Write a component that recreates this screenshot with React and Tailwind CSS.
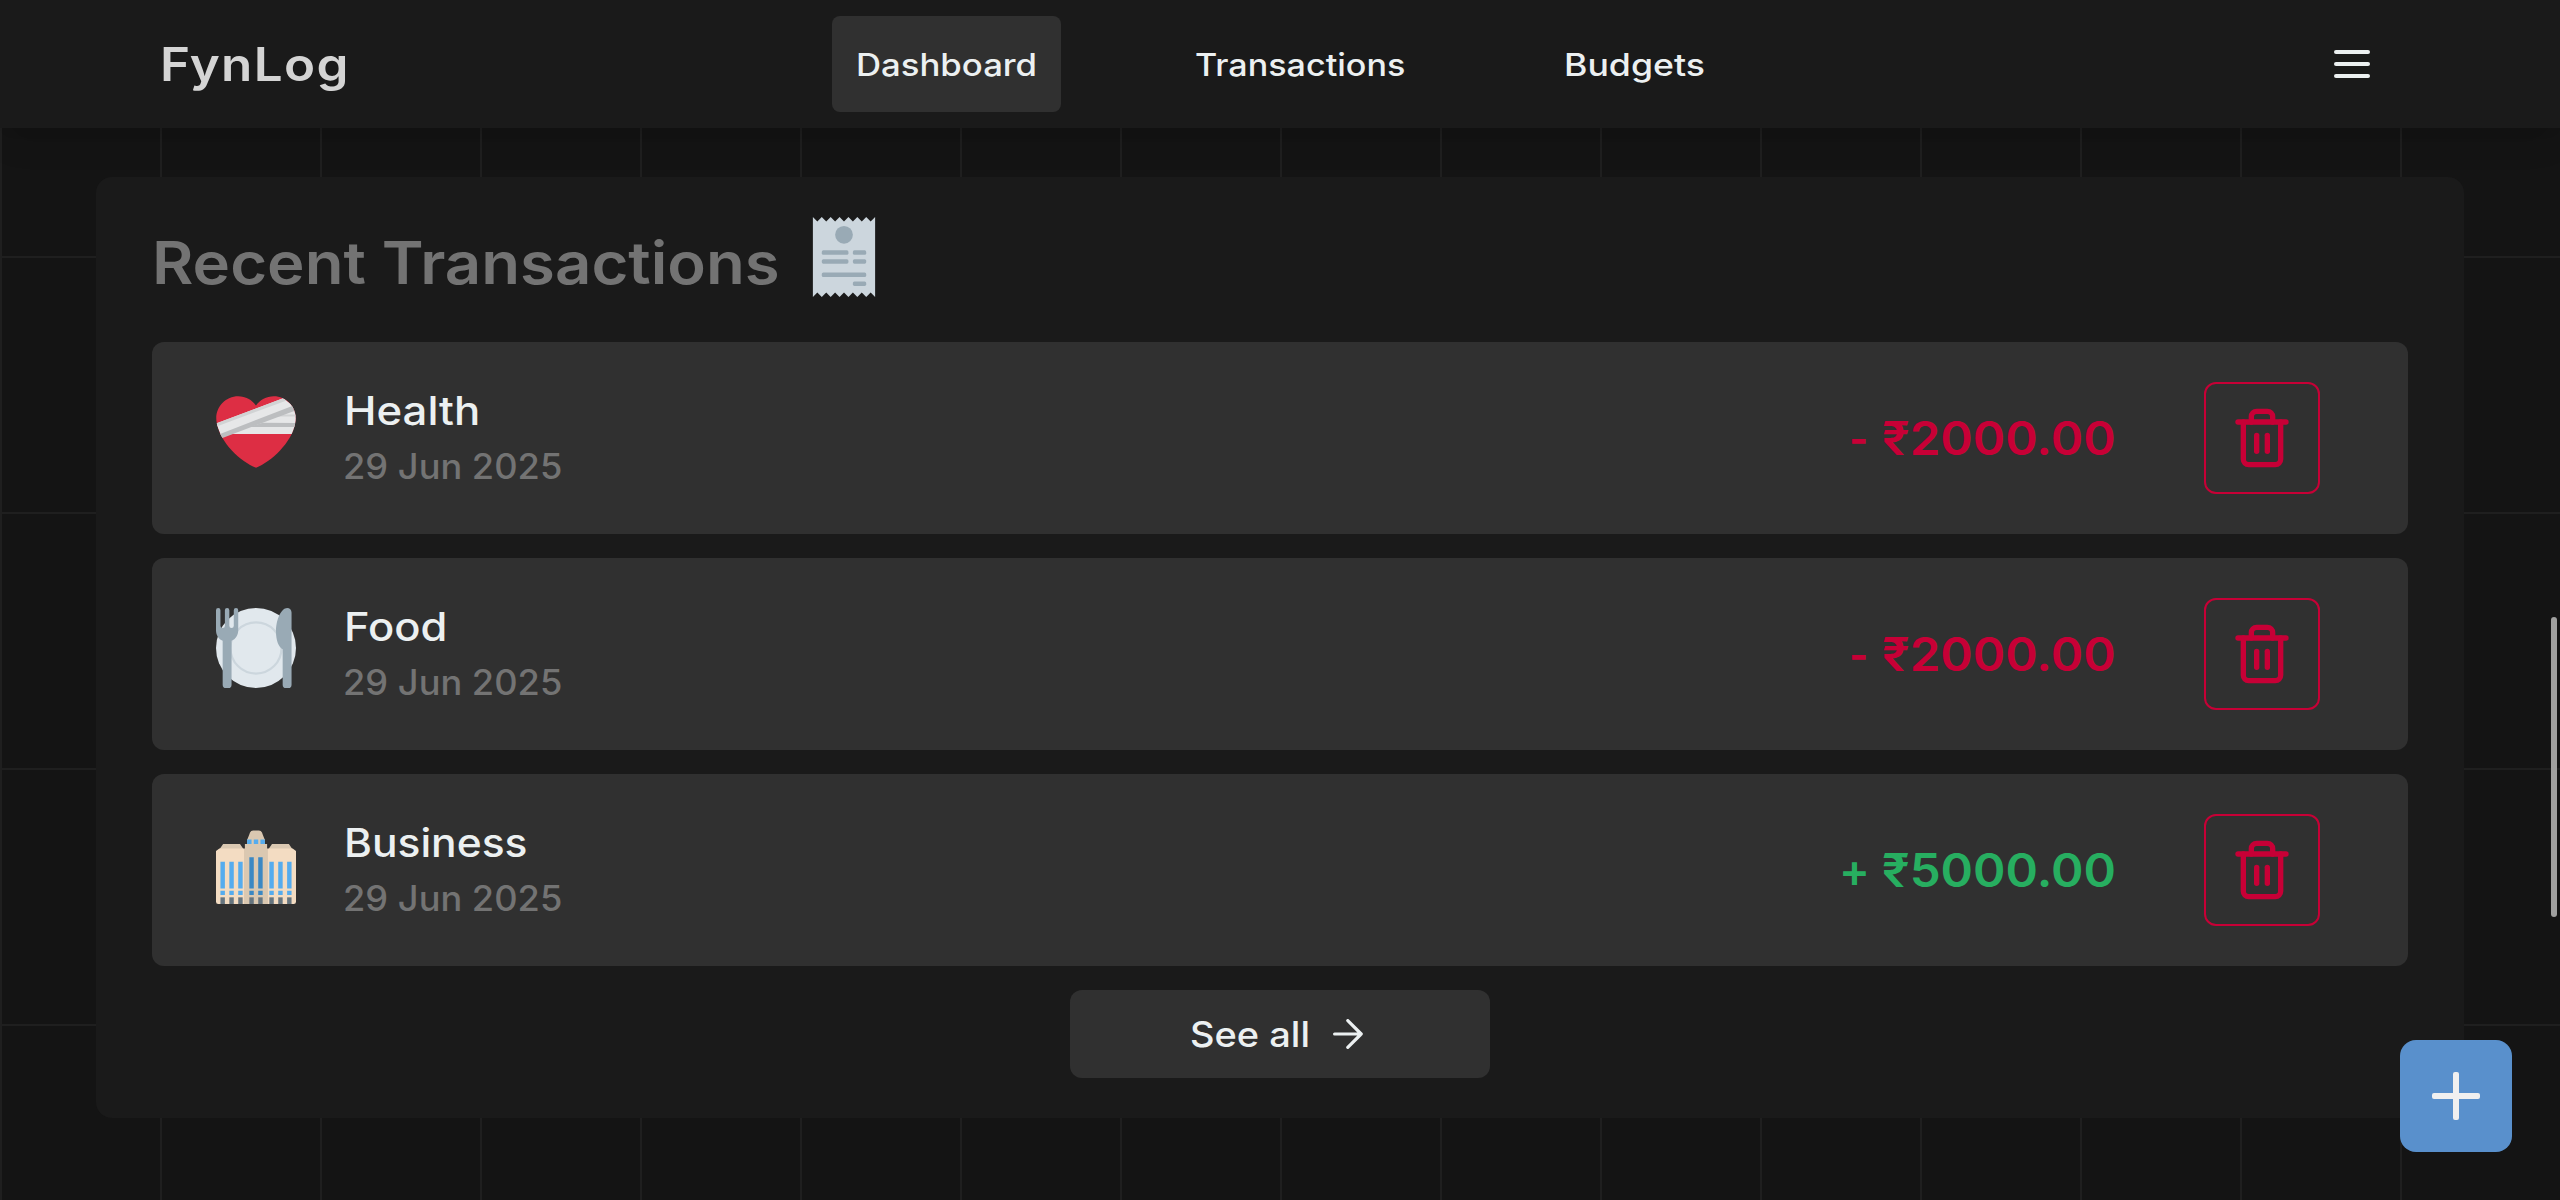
import { Trash2 } from "lucide-react";

const HEART =
  "M35.885 11.833c0-5.45-4.418-9.868-9.867-9.868-3.308 0-6.227 1.633-8.018 4.129-1.791-2.496-4.71-4.129-8.017-4.129-5.45 0-9.868 4.417-9.868 9.868 0 .772.098 1.52.266 2.241C1.751 22.587 11.216 31.568 18 34.034c6.783-2.466 16.249-11.447 17.617-19.959.17-.721.268-1.469.268-2.242z";

function HeartIcon() {
  return (
    <svg viewBox="0 0 36 36" className="mt-[10px] size-20 shrink-0">
      <clipPath id="heart-shape">
        <path d={HEART} />
      </clipPath>
      <path fill="#DD2E44" d={HEART} />
      <g clipPath="url(#heart-shape)">
        <path fill="#E6E7E8" d="M36 8v10.9H6.600L22 12z" />
        <path fill="#D1D3D4" d="M28 10.100h8v.9H26z" />
        <path fill="#BCBEC0" d="M36 13.900v1.800H15l6-1.900z" />
        <path fill="#E6E7E8" d="M0 14.200 30.200 2.800 36 7.100 2.400 20z" />
        <path fill="#D1D3D4" d="M0 14.200 30.200 2.800l1.600 1L0 15.600z" />
        <path fill="#BCBEC0" d="M1 19.200 34.600 6.200l.9 2.200L2 21z" />
      </g>
    </svg>
  );
}

function PlateIcon() {
  return (
    <svg viewBox="0 0 36 36" className="mt-[10px] size-20 shrink-0">
      <circle cx="18" cy="18" r="18" fill="#E1E8ED" />
      <circle cx="18" cy="18" r="11.5" fill="none" stroke="#CCD6DD" />
      <g fill="#99AAB5">
        <path d="M0 1a1 1 0 0 1 2 0v7a1 1 0 0 0 2 0V1a1 1 0 0 1 2 0v7a1 1 0 0 0 2 0V1a1 1 0 0 1 2 0v9c0 2.200-1.200 4.100-3 4.700V34.500a1.500 1.500 0 0 1-1.500 1.500h-1A1.500 1.500 0 0 1 3 34.500V14.700C1.200 14.100 0 12.200 0 10z" />
        <path d="M32 0c1.200 0 2 .9 2 2v32.500a1.500 1.500 0 0 1-1.500 1.500h-1a1.500 1.500 0 0 1-1.500-1.500V18.600c-1.800-1-3-3.800-3-8.100C27 5 29.500 0 32 0z" />
      </g>
    </svg>
  );
}

const WING_WINDOWS = [2, 6, 10, 24, 28, 32];
const TOWER_WINDOWS = [15, 19];

function BuildingIcon() {
  return (
    <svg viewBox="0 0 36 36" className="mt-[10px] size-20 shrink-0">
      <path fill="#DAC8B1" d="M3.200 9h7.600L12.500 11.500H1.500zM25.200 9h7.600l1.700 2.500H23.500z" />
      <path fill="#F3DCC2" d="M1.500 11H13v25H1a1 1 0 0 1-1-1V12.200zM23 11h11.500L36 12.200V35a1 1 0 0 1-1 1H23z" />
      <path fill="#DAC8B1" d="M14 7.200 14.900 5 15.300 3.800Q15.700 2.900 16.700 2.900h2.600Q20.300 2.900 20.700 3.800L21.100 5 22 7.200z" />
      <path fill="#DAC8B1" d="M13 9h10v27H13zM14 7h8v2h-8z" />
      <path fill="#55ACEE" d="M14 7h2v2h-2zM17 7h2v2h-2zM20 7h2v2h-2z" />
      {WING_WINDOWS.map((x) => (
        <g key={x}>
          <path fill="#55ACEE" d={`M${x} 17h2v12h-2zM${x} 30h2v2h-2z`} />
          <path fill="#66757F" d={`M${x} 33h2v3h-2z`} />
        </g>
      ))}
      {TOWER_WINDOWS.map((x) => (
        <g key={x}>
          <path fill="#3B88C3" d={`M${x} 15h2v14h-2zM${x} 30h2v2h-2z`} />
          <path fill="#66757F" d={`M${x} 33h2v3h-2z`} />
        </g>
      ))}
    </svg>
  );
}

function ReceiptIcon() {
  return (
    <svg viewBox="0 0 36 36" className="size-20 shrink-0">
      <path
        fill="#CCD6DD"
        d="M4 0l2 2 2-2 2 2 2-2 2 2 2-2 2 2 2-2 2 2 2-2 2 2 2-2 2 2 2-2v36l-2-2-2 2-2-2-2 2-2-2-2 2-2-2-2 2-2-2-2 2-2-2-2 2-2-2-2 2z"
      />
      <g fill="#99AAB5">
        <circle cx="18" cy="8" r="4" />
        <rect x="8" y="15" width="12" height="2" rx=".7" />
        <rect x="22" y="15" width="6" height="2" rx=".7" />
        <rect x="8" y="19" width="12" height="2" rx=".7" />
        <rect x="22" y="19" width="6" height="2" rx=".7" />
        <rect x="8" y="25" width="20" height="2" rx=".7" />
        <rect x="22" y="29" width="6" height="2" rx=".7" />
      </g>
    </svg>
  );
}

const transactions = [
  { name: "Health", nameClass: "scale-x-[1.12]", Icon: HeartIcon, amount: "₹2000.00", income: false },
  { name: "Food", nameClass: "scale-x-[1.115]", Icon: PlateIcon, amount: "₹2000.00", income: false },
  { name: "Business", nameClass: "scale-x-[1.09]", Icon: BuildingIcon, amount: "₹5000.00", income: true },
];

function TransactionRow({ name, nameClass, Icon, amount, income }) {
  return (
    <li className="flex h-48 items-center rounded-xl bg-[#303030] pr-[88px] pl-16">
      <div className="flex h-48 gap-12 py-10">
        <Icon />
        <div className="flex flex-col items-start font-medium whitespace-nowrap">
          <span className={`origin-left text-[39px] leading-[57px] text-[#ecf0f1] ${nameClass}`}>{name}</span>
          <span className="-ml-px origin-left scale-x-[1.035] text-[35px] leading-[55px] text-[#737373]">29 Jun 2025</span>
        </div>
      </div>
      <div className={`ml-auto flex text-[46px] leading-none font-semibold ${income ? "text-[#27ae60]" : "text-[#c70036]"}`}>
        <span className={income ? "w-[43px]" : "w-[33px] origin-left scale-x-90"}>{income ? "+" : "-"}</span>
        <span className="w-[322px] whitespace-nowrap">
          <span className="inline-block origin-left scale-x-[1.07]">{amount}</span>
        </span>
      </div>
      <button className="flex h-28 w-[116px] items-center justify-center rounded-xl border-2 border-[#c70036] text-[#c70036]">
        <Trash2 size={64} />
      </button>
    </li>
  );
}

export default function App() {
  return (
    <div className="relative flex h-[1200px] flex-col overflow-hidden bg-[#141414] bg-[linear-gradient(to_right,#1f1f1f_2px,transparent_2px),linear-gradient(to_bottom,#1f1f1f_2px,transparent_2px)] bg-[size:160px_256px] font-['Inter',sans-serif]">
      <header className="flex h-32 shrink-0 items-center bg-[#1a1a1a] pr-[190px] pl-40 shadow-[0_20px_30px_-6px_rgba(0,0,0,0.1),0_8px_12px_-8px_rgba(0,0,0,0.1)]">
        <div className="w-[672px]">
          <span className="inline-block origin-left scale-x-[1.1] text-[46.5px] leading-none font-semibold tracking-[1.2px] text-[#d4d4d4]">FynLog</span>
        </div>
        <nav className="flex gap-[110px] text-[31px] font-medium text-[#ecf0f1]">
          <a className="flex h-24 w-[229px] items-center rounded-lg bg-[#303030] px-6 pt-0.5">
            <span className="origin-left scale-x-[1.12]">Dashboard</span>
          </a>
          <a className="flex h-24 w-[259px] items-center rounded-lg px-6 pt-0.5">
            <span className="origin-left scale-x-[1.1]">Transactions</span>
          </a>
          <a className="flex h-24 items-center rounded-lg px-6 pt-0.5">
            <span className="origin-left scale-x-[1.15]">Budgets</span>
          </a>
        </nav>
        <button className="ml-auto flex flex-col gap-2">
          <span className="h-1 w-9 rounded-full bg-[#ecf0f1]" />
          <span className="h-1 w-9 rounded-full bg-[#ecf0f1]" />
          <span className="h-1 w-9 rounded-full bg-[#ecf0f1]" />
        </button>
      </header>

      <section className="mx-24 mt-[49px] flex h-[941px] flex-col rounded-2xl bg-[#1a1a1a] px-14 pt-10">
        <div className="flex h-[125px] items-start">
          <h2 className="w-[652px] pt-3 text-[58.5px] leading-[67px] font-semibold whitespace-nowrap text-[#737373]">
            <span className="inline-block origin-left scale-x-[1.085]">Recent Transactions</span>
          </h2>
          <ReceiptIcon />
        </div>
        <ul className="flex flex-col gap-6">
          {transactions.map((t) => (
            <TransactionRow key={t.name} {...t} />
          ))}
        </ul>
        <button className="mx-auto mt-6 flex h-[88px] w-[420px] items-center rounded-xl bg-[#303030] pl-[120px] text-[#ecf0f1]">
          <span className="w-[143px] text-left text-[35px] leading-none font-medium">
            <span className="inline-block origin-left scale-x-[1.085]">See all</span>
          </span>
          <svg viewBox="0 0 30 30" className="size-[30px]" fill="none" stroke="currentColor" strokeWidth="3.2" strokeLinecap="round" strokeLinejoin="round">
            <path d="M1.600 15h26.600M14.800 1.600 28.200 15 14.800 28.400" />
          </svg>
        </button>
      </section>

      <div className="absolute top-[617px] right-[3px] h-[300px] w-1.5 rounded-full bg-[#a0a09f]" />
      <button className="absolute right-12 bottom-12 flex size-28 items-center justify-center rounded-2xl bg-[#5990cc] text-[#f0f0f0]">
        <svg viewBox="0 0 48 48" className="size-12" fill="currentColor">
          <rect x="21" y="0" width="6" height="48" rx="2" />
          <rect x="0" y="21" width="48" height="6" rx="2" />
        </svg>
      </button>
    </div>
  );
}
